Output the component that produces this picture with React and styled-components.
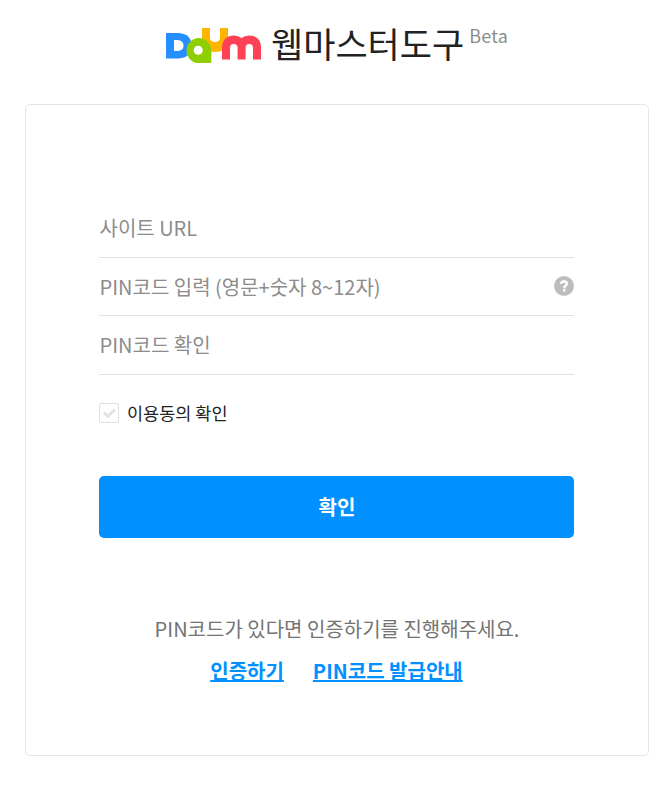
import React, { Component } from 'react';
import styled, { createGlobalStyle } from 'styled-components';

const GlobalStyle = createGlobalStyle`
  * {
    box-sizing: border-box;
  }
  body {
    margin: 0;
    background: #fff;
    color: #222;
    font-family: 'Noto Sans CJK KR', sans-serif;
  }
`;

const Page = styled.div`
  width: 672px;
  height: 786px;
  padding: 0 23px 0 25px;
`;

const Header = styled.header`
  display: flex;
  align-items: flex-start;
  height: 104px;
  padding: 27px 0 0 140px;
`;

const Title = styled.h1`
  margin: -10px 0 0 9px;
  font-size: 35px;
  font-weight: 400;
  line-height: 52px;
  white-space: nowrap;
`;

const Beta = styled.span`
  margin: -5px 0 0 5px;
  color: #8c8c8c;
  font-size: 18px;
  letter-spacing: .2px;
  line-height: 26px;
`;

const Card = styled.main`
  height: 652px;
  padding: 93px 74px 0 73px;
  border: 1px solid #e5e5e5;
  border-radius: 5px;
`;

const Field = styled.div`
  display: flex;
  align-items: center;
  height: ${({ height }) => height || 59}px;
  padding-bottom: ${({ lift }) => lift || 0}px;
  border-bottom: 1px solid #e1e1e1;
`;

const Input = styled.input`
  flex: 1;
  min-width: 0;
  height: 30px;
  padding: 0 0 0 .5px;
  border: 0;
  outline: 0;
  background: none;
  color: #222;
  font-family: inherit;
  font-size: 20px;
  &::placeholder {
    color: #8c8c8c;
    opacity: 1;
  }
`;

const Agree = styled.label`
  display: flex;
  align-items: center;
  height: 26px;
  margin-top: 25px;
  font-size: 17.5px;
  line-height: 26px;
`;

const CheckBox = styled.span`
  display: flex;
  width: 20px;
  height: 20px;
  margin-right: 8px;
  border: 1px solid #e1e1e1;
  border-radius: 2px;
`;

const Submit = styled.button`
  display: block;
  width: 100%;
  height: 62px;
  margin-top: 50px;
  padding: 0 0 2px 1px;
  border: 0;
  border-radius: 5px;
  background: #0090ff;
  color: #fff;
  font-family: inherit;
  font-size: 20px;
  font-weight: 700;
`;

const Guide = styled.p`
  margin: 76px 0 0;
  padding-left: 1px;
  color: #737373;
  font-size: 20px;
  line-height: 30px;
  text-align: center;
  white-space: nowrap;
`;

const Links = styled.div`
  display: flex;
  justify-content: center;
  gap: 29px;
  margin-top: 12px;
`;

const Link = styled.a`
  color: #0090ff;
  font-size: 20px;
  font-weight: 700;
  line-height: 30px;
  text-decoration: underline;
  text-decoration-thickness: 2px;
`;

const DaumLogo = () => (
  <svg width="97" height="38" viewBox="0 0 97 38">
    <path fill="#ffb400" d="M37 1h8v9.500q0 4.500 5 4.500t5-4.500V1h8v11q-1 13-13 13T37 12z" />
    <path fill="#258fff" d="M1 6h13q12.500 1 12.500 12.700T14 31.400H1z" />
    <path fill="#fff" d="M9 13h3.500q6 .500 6 5.500t-6 5.500H9z" />
    <path fill="#8fce00" d="M34 11a12.500 12.500 0 0 1 12.300 12.500v12.600H34A12.500 12.500 0 0 1 34 11z" />
    <circle cx="33.200" cy="23.300" r="4.500" fill="#fff" />
    <path fill="#ff4155" d="M57 32.500V20q1-11.500 12-11.500 4.500 0 7.500 2.500 3-2.500 8-2.500 10.500 0 11.500 11v13h-8V21q0-4-3.700-4t-3.700 4v11.500h-8V21q0-4-3.800-4T65 21v11.500z" />
  </svg>
);

const HelpIcon = styled(({ className }) => (
  <svg className={className} width="20" height="20" viewBox="0 0 20 20">
    <circle cx="10" cy="10" r="10" fill="#bdbdbd" />
    <path d="M7.200 7.900Q7.200 5.500 10 5.500t2.800 2.300Q12.800 9.200 11.200 10 10.200 10.700 10.200 12.200" fill="none" stroke="#fff" strokeWidth="2.300" />
    <rect x="9" y="13.200" width="2.400" height="2.300" fill="#fff" />
  </svg>
))`
  margin-bottom: 2px;
`;

const CheckIcon = () => (
  <svg width="18" height="18" viewBox="0 0 18 18">
    <path d="M3.800 8.500l4 4L14.800 5.500" fill="none" stroke="#e1e1e1" strokeWidth="2.700" />
  </svg>
);

export default class App extends Component {
  render() {
    return (
      <Page>
        <GlobalStyle />
        <Header>
          <DaumLogo />
          <Title>웹마스터도구</Title>
          <Beta>Beta</Beta>
        </Header>
        <Card>
          <Field height={60}>
            <Input type="text" placeholder="사이트 URL" />
          </Field>
          <Field height={58}>
            <Input type="password" placeholder="PIN코드 입력 (영문+숫자 8~12자)" />
            <HelpIcon />
          </Field>
          <Field lift={2}>
            <Input type="password" placeholder="PIN코드 확인" />
          </Field>
          <Agree>
            <CheckBox>
              <CheckIcon />
            </CheckBox>
            이용동의 확인
          </Agree>
          <Submit type="button">확인</Submit>
          <Guide>PIN코드가 있다면 인증하기를 진행해주세요.</Guide>
          <Links>
            <Link href="#">인증하기</Link>
            <Link href="#">PIN코드 발급안내</Link>
          </Links>
        </Card>
      </Page>
    );
  }
}
